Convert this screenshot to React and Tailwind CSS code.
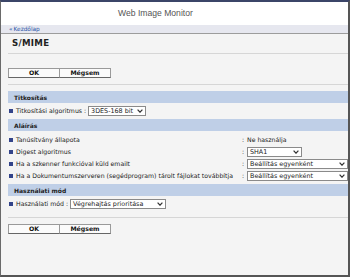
import React from "react";

function Chevron() {
  return (
    <svg width="6" height="4" viewBox="0 0 6 4" className="shrink-0">
      <path d="M0.6 0.6 L3 3.2 L5.4 0.6" fill="none" stroke="#333" strokeWidth="1.2" />
    </svg>
  );
}

function Sel({ className, children }) {
  return (
    <div
      className={`flex items-center justify-between h-[10px] bg-white border border-[#8a8a8a] pl-[2px] pr-[2px] text-[6.4px] leading-none text-[#222] ${className}`}
    >
      <span className="whitespace-nowrap">{children}</span>
      <Chevron />
    </div>
  );
}

function Bullet() {
  return <span className="w-[4px] h-[4px] bg-[#33448a] shrink-0 mr-[3px]" />;
}

function SectionHeader({ children }) {
  return (
    <div className="h-[12px] ml-[7px] bg-[#bfcfe7] flex items-center pl-[6px] text-[6px] font-bold text-[#222]">
      {children}
    </div>
  );
}

function Buttons() {
  return (
    <div className="flex ml-[7px] h-[10px]">
      <div className="w-[52px] h-full flex items-center justify-center bg-[#fbfbfb] border border-[#9a9a9a] border-b-[#666] text-[6.2px] font-bold text-[#111]">
        OK
      </div>
      <div className="w-[51px] h-full flex items-center justify-center bg-[#fbfbfb] border border-l-0 border-[#9a9a9a] border-b-[#666] text-[6.2px] font-bold text-[#111]">
        Mégsem
      </div>
    </div>
  );
}

function ARow({ label, children }) {
  return (
    <div className="flex items-center h-[12px] pl-[8px]">
      <Bullet />
      <div className="w-[228px] flex justify-between whitespace-nowrap">
        <span>{label}</span>
        <span>:</span>
      </div>
      <div className="ml-[3px] flex items-center">{children}</div>
    </div>
  );
}

export default function App() {
  return (
    <div className="w-[350px] h-[277px] overflow-hidden bg-[#f4f4f4] border-t-2 border-t-[#3b4568] border-l border-l-[#6a6a6a] border-r-2 border-r-[#555] border-b-2 border-b-[#555] font-['DejaVu_Sans',Verdana,sans-serif] text-[6.2px] text-[#222] flex flex-col">
      {/* top header */}
      <div className="h-[23px] bg-white flex items-center pl-[117px] text-[8.6px] text-[#555] font-['Liberation_Sans',Arial,sans-serif]">
        Web Image Monitor
      </div>
      {/* breadcrumb strip */}
      <div className="h-[9px] bg-[#e6e7ef] border-b border-b-[#9c9c9c] flex items-center pl-[8px] text-[5.8px] text-[#2a56a8]">
        <span className="mr-[1px]">«</span>Kezdőlap
      </div>
      {/* title */}
      <div className="h-[20px] ml-[7px] border-b border-b-[#d6d6d6] flex items-center pl-[4px] text-[8.6px] font-bold text-[#222] tracking-[0.3px]">
        S/MIME
      </div>
      <div className="h-[14px]" />
      <Buttons />
      <div className="h-[6px]" />
      <div className="ml-[7px] border-b border-b-[#d6d6d6]" />
      <div className="h-[6px]" />

      <SectionHeader>Titkosítás</SectionHeader>
      <div className="flex items-center h-[16px] pl-[8px]">
        <Bullet />
        <span className="whitespace-nowrap">Titkosítási algoritmus :</span>
        <Sel className="ml-[2px] w-[58px]">3DES-168 bit</Sel>
      </div>

      <SectionHeader>Aláírás</SectionHeader>
      <div className="h-[3px]" />
      <ARow label="Tanúsítvány állapota">
        <span className="whitespace-nowrap">Ne használja</span>
      </ARow>
      <ARow label="Digest algoritmus">
        <Sel className="w-[55px]">SHA1</Sel>
      </ARow>
      <ARow label="Ha a szkenner funkcióval küld emailt">
        <Sel className="w-[101px]">Beállítás egyenként</Sel>
      </ARow>
      <ARow label="Ha a Dokumentumszerveren (segédprogram) tárolt fájlokat továbbítja">
        <Sel className="w-[101px]">Beállítás egyenként</Sel>
      </ARow>
      <div className="h-[2px]" />

      <SectionHeader>Használati mód</SectionHeader>
      <div className="flex items-center h-[16px] pl-[8px]">
        <Bullet />
        <span className="whitespace-nowrap">Használati mód :</span>
        <Sel className="ml-[2px] w-[96px]">Végrehajtás prioritása</Sel>
      </div>
      <div className="h-[5px]" />
      <div className="ml-[7px] border-b border-b-[#d6d6d6]" />
      <div className="h-[6px]" />
      <Buttons />
    </div>
  );
}
